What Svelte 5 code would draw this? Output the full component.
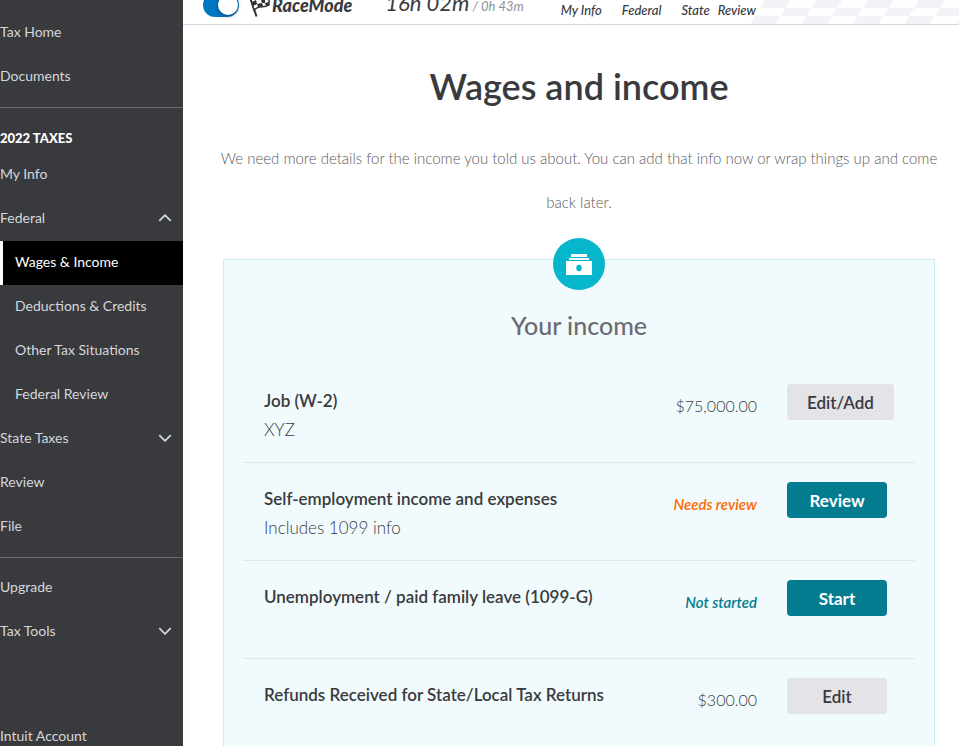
<script>
	let raceMode = true;

	const topLinks = ['Tax Home', 'Documents'];

	const federalLinks = [
		{ label: 'Wages & Income', active: true },
		{ label: 'Deductions & Credits' },
		{ label: 'Other Tax Situations' },
		{ label: 'Federal Review' }
	];

	const steps = ['My Info', 'Federal', 'State', 'Review'];

	const incomes = [
		{ title: 'Job (W-2)', detail: 'XYZ', amount: '$75,000.00', action: 'Edit/Add' },
		{
			title: 'Self-employment income and expenses',
			detail: 'Includes 1099 info',
			status: 'Needs review',
			warn: true,
			action: 'Review',
			primary: true
		},
		{
			title: 'Unemployment / paid family leave (1099-G)',
			status: 'Not started',
			action: 'Start',
			primary: true
		},
		{
			title: 'Refunds Received for State/Local Tax Returns',
			amount: '$300.00',
			action: 'Edit'
		}
	];
</script>

<div class="page">
	<nav class="sidebar">
		{#each topLinks as label}
			<a class="navLink" href="#top">{label}</a>
		{/each}
		<hr />
		<h2 class="navHeading">2022 TAXES</h2>
		<a class="navLink" href="#info">My Info</a>
		<button class="navLink" aria-expanded="true">
			Federal
			<svg class="chevron" viewBox="0 0 12 7"><path d="M1 6 L6 1 L11 6" /></svg>
		</button>
		{#each federalLinks as link}
			<a class="navLink sub" class:active={link.active} href="#federal">{link.label}</a>
		{/each}
		<button class="navLink" aria-expanded="false">
			State Taxes
			<svg class="chevron" viewBox="0 0 12 7"><path d="M1 1 L6 6 L11 1" /></svg>
		</button>
		<a class="navLink" href="#review">Review</a>
		<a class="navLink" href="#file">File</a>
		<hr />
		<div class="navGroup">
			<a class="navLink" href="#upgrade">Upgrade</a>
			<button class="navLink" aria-expanded="false">
				Tax Tools
				<svg class="chevron" viewBox="0 0 12 7"><path d="M1 1 L6 6 L11 1" /></svg>
			</button>
		</div>
		<a class="navLink" href="#account">Intuit Account</a>
	</nav>

	<div class="content">
		<header class="raceBar">
			<svg class="checkers" width="209" height="24" viewBox="0 0 209 24">
				<defs>
					<pattern
						id="check"
						x="15"
						width="51.4"
						height="16"
						patternUnits="userSpaceOnUse"
						patternTransform="skewX(-32)"
					>
						<rect width="25.7" height="8" fill="#f2f3f8" />
						<rect x="25.7" y="8" width="25.7" height="8" fill="#f2f3f8" />
					</pattern>
				</defs>
				<polygon points="15,0 209,0 209,24 0,24" fill="url(#check)" />
			</svg>
			<label class="race">
				<input type="checkbox" class="toggle" bind:checked={raceMode} />
				<svg class="flag" width="22" height="24" viewBox="0 0 22 24">
					<path d="M1 4 L7.5 23.5" stroke="#2f3034" stroke-width="2" fill="none" />
					<path
						d="M2 7 C8 2 12 8 20 4 L20 12 C14 16 11 11 5 17 Z"
						fill="#fff"
						stroke="#2f3034"
						stroke-width="1.5"
					/>
					<path
						d="M3 9 L7 7 L8 11 L4 13 Z M12 7 L16 6 L16 10 L13 10 Z M8 11 L13 10 L14 13 L9 14 Z M16 10 L20 9 L20 12 L17 13 Z"
						fill="#2f3034"
					/>
				</svg>
				<span class="raceName">RaceMode</span>
			</label>
			<div class="time"><span class="elapsed">16h 02m</span> / 0h 43m</div>
			<ul class="steps">
				{#each steps as step}
					<li>{step}</li>
				{/each}
			</ul>
		</header>

		<main>
			<h1>Wages and income</h1>
			<p class="intro">
				We need more details for the income you told us about. You can add that info now or wrap
				things up and come back later.
			</p>

			<section class="card">
				<div class="badge">
					<svg width="26" height="22" viewBox="0 0 26 22">
						<path d="M5 1H21V4H5Z M3 5H23V7H3Z M0 8H26V22H0Z" fill="#fff" />
						<ellipse cx="13" cy="15" rx="2.7" ry="3.2" fill="#05b6cc" />
					</svg>
				</div>
				<h2>Your income</h2>
				<ul>
					{#each incomes as item}
						<li class="income">
							<div class="name">
								<h3>{item.title}</h3>
								{#if item.detail}
									<p>{item.detail}</p>
								{/if}
							</div>
							{#if item.amount}
								<span class="amount">{item.amount}</span>
							{:else}
								<span class="status" class:warn={item.warn}>{item.status}</span>
							{/if}
							<div>
								<button class="action" class:primary={item.primary}>{item.action}</button>
							</div>
						</li>
					{/each}
				</ul>
			</section>
		</main>
	</div>
</div>

<style>
	:global(body) {
		margin: 0;
		background: #fff;
		color: #393a3d;
		font-family: Lato, 'Open Sans', sans-serif;
	}

	h1, h2, h3, p, ul {
		margin: 0;
		padding: 0;
	}

	ul {
		list-style: none;
	}

	.page {
		display: flex;
		height: 100vh;
		overflow: hidden;
	}

	/* Sidebar */
	.sidebar {
		flex: 0 0 183px;
		box-sizing: border-box;
		padding-top: 11px;
		background: #393a3d;
		overflow: hidden;
	}

	.navLink {
		display: flex;
		justify-content: space-between;
		align-items: center;
		box-sizing: border-box;
		width: 100%;
		height: 44px;
		padding: 0 11px 3px 0;
		border: 0;
		background: none;
		color: #d4d7dc;
		font: 14px Lato, 'Open Sans', sans-serif;
		text-decoration: none;
		cursor: pointer;
	}

	.navLink:hover {
		color: #fff;
	}

	.sub {
		padding-left: 12px;
		border-left: 3px solid transparent;
	}

	.active {
		border-left-color: #fff;
		background: #000;
		color: #fff;
	}

	.chevron {
		width: 14px;
		height: 8px;
		fill: none;
		stroke: #d4d7dc;
		stroke-width: 1.5;
	}

	hr {
		margin: 8px 0 0;
		border: 0;
		border-top: 1px solid #6b6c72;
	}

	.navHeading {
		padding: 18px 0 2px;
		color: #fff;
		font-size: 13px;
		font-weight: 900;
		line-height: 25px;
	}

	.navGroup {
		padding: 8px 0 61px;
	}

	/* RaceMode bar */
	.content {
		flex: 1;
		min-width: 0;
	}

	.raceBar {
		position: relative;
		display: flex;
		align-items: flex-end;
		height: 24px;
		padding-left: 20px;
		border-bottom: 1px solid #d4d7dc;
		overflow: hidden;
		font-style: italic;
		white-space: nowrap;
	}

	.checkers {
		position: absolute;
		right: 0;
		bottom: 0;
	}

	.race {
		display: flex;
		align-items: flex-end;
		padding-bottom: 7px;
		cursor: pointer;
	}

	.toggle {
		appearance: none;
		width: 36px;
		height: 24px;
		margin: 0;
		border-radius: 12px;
		background: #8d9096;
	}

	.toggle::before {
		content: '';
		display: block;
		width: 20px;
		height: 20px;
		margin: 2px 0 0 1px;
		border-radius: 50%;
		background: #fff;
		box-shadow: 0 1px 4px rgba(0, 0, 0, 0.4);
	}

	.toggle:checked {
		background: #0077c5;
	}

	.toggle:checked::before {
		margin-left: 15px;
	}

	.flag {
		margin-left: 10px;
	}

	.raceName {
		margin-left: 1px;
		font-size: 18px;
		font-weight: 900;
		line-height: 24px;
	}

	.time {
		margin-left: 33px;
		padding-bottom: 6px;
		color: #8d9096;
		font-size: 13px;
		line-height: 24px;
	}

	.elapsed {
		color: #393a3d;
		font-size: 22px;
	}

	.steps {
		position: relative;
		display: flex;
		margin-left: 37px;
		padding-bottom: 6px;
		font-size: 13px;
		font-weight: 500;
		line-height: 16px;
	}

	.steps li {
		margin-right: 20px;
	}

	.steps li:nth-child(3) {
		margin-right: 8px;
	}

	/* Main column */
	main {
		padding: 39px 24px 0 40px;
		text-align: center;
	}

	h1 {
		font-size: 36px;
		font-weight: 600;
		line-height: 44px;
	}

	.intro {
		margin: 0 -8px;
		padding-top: 28px;
		color: #5a5b60;
		font-size: 15px;
		font-weight: 300;
		line-height: 44px;
	}

	.card {
		margin-top: 35px;
		padding: 0 19px;
		border: 1px solid #c9eef0;
		background: #f1fafc;
	}

	.badge {
		display: flex;
		justify-content: center;
		align-items: center;
		width: 52px;
		height: 52px;
		margin: -22px auto 0;
		border-radius: 50%;
		background: #05b6cc;
	}

	.card h2 {
		padding: 19px 0 23px;
		color: #6b6c72;
		font-size: 25px;
		font-weight: 500;
		line-height: 32px;
	}

	.income {
		display: grid;
		grid-template-columns: 1fr auto 107px;
		column-gap: 30px;
		box-sizing: border-box;
		height: 98px;
		padding: 19px 21px 0;
		border-top: 1px solid #dfe9ec;
		text-align: left;
	}

	.income:first-child {
		border-top-color: transparent;
	}

	.name {
		padding-top: 2px;
	}

	.name h3 {
		font-size: 17px;
		font-weight: 600;
		line-height: 29px;
	}

	.name p {
		font-size: 17px;
		font-weight: 300;
		line-height: 29px;
	}

	.amount {
		font-size: 16px;
		font-weight: 300;
		line-height: 44px;
	}

	.status {
		color: #037c8f;
		font-size: 15px;
		font-style: italic;
		font-weight: 600;
		line-height: 44px;
	}

	.warn {
		color: #ff6a00;
	}

	.action {
		min-width: 100px;
		height: 36px;
		padding: 0 20px;
		border: 0;
		border-radius: 4px;
		background: #e3e3e8;
		color: #393a3d;
		font: 600 17px Lato, 'Open Sans', sans-serif;
		cursor: pointer;
	}

	.primary {
		background: #037c8f;
		color: #fff;
		font-weight: 700;
	}
</style>
